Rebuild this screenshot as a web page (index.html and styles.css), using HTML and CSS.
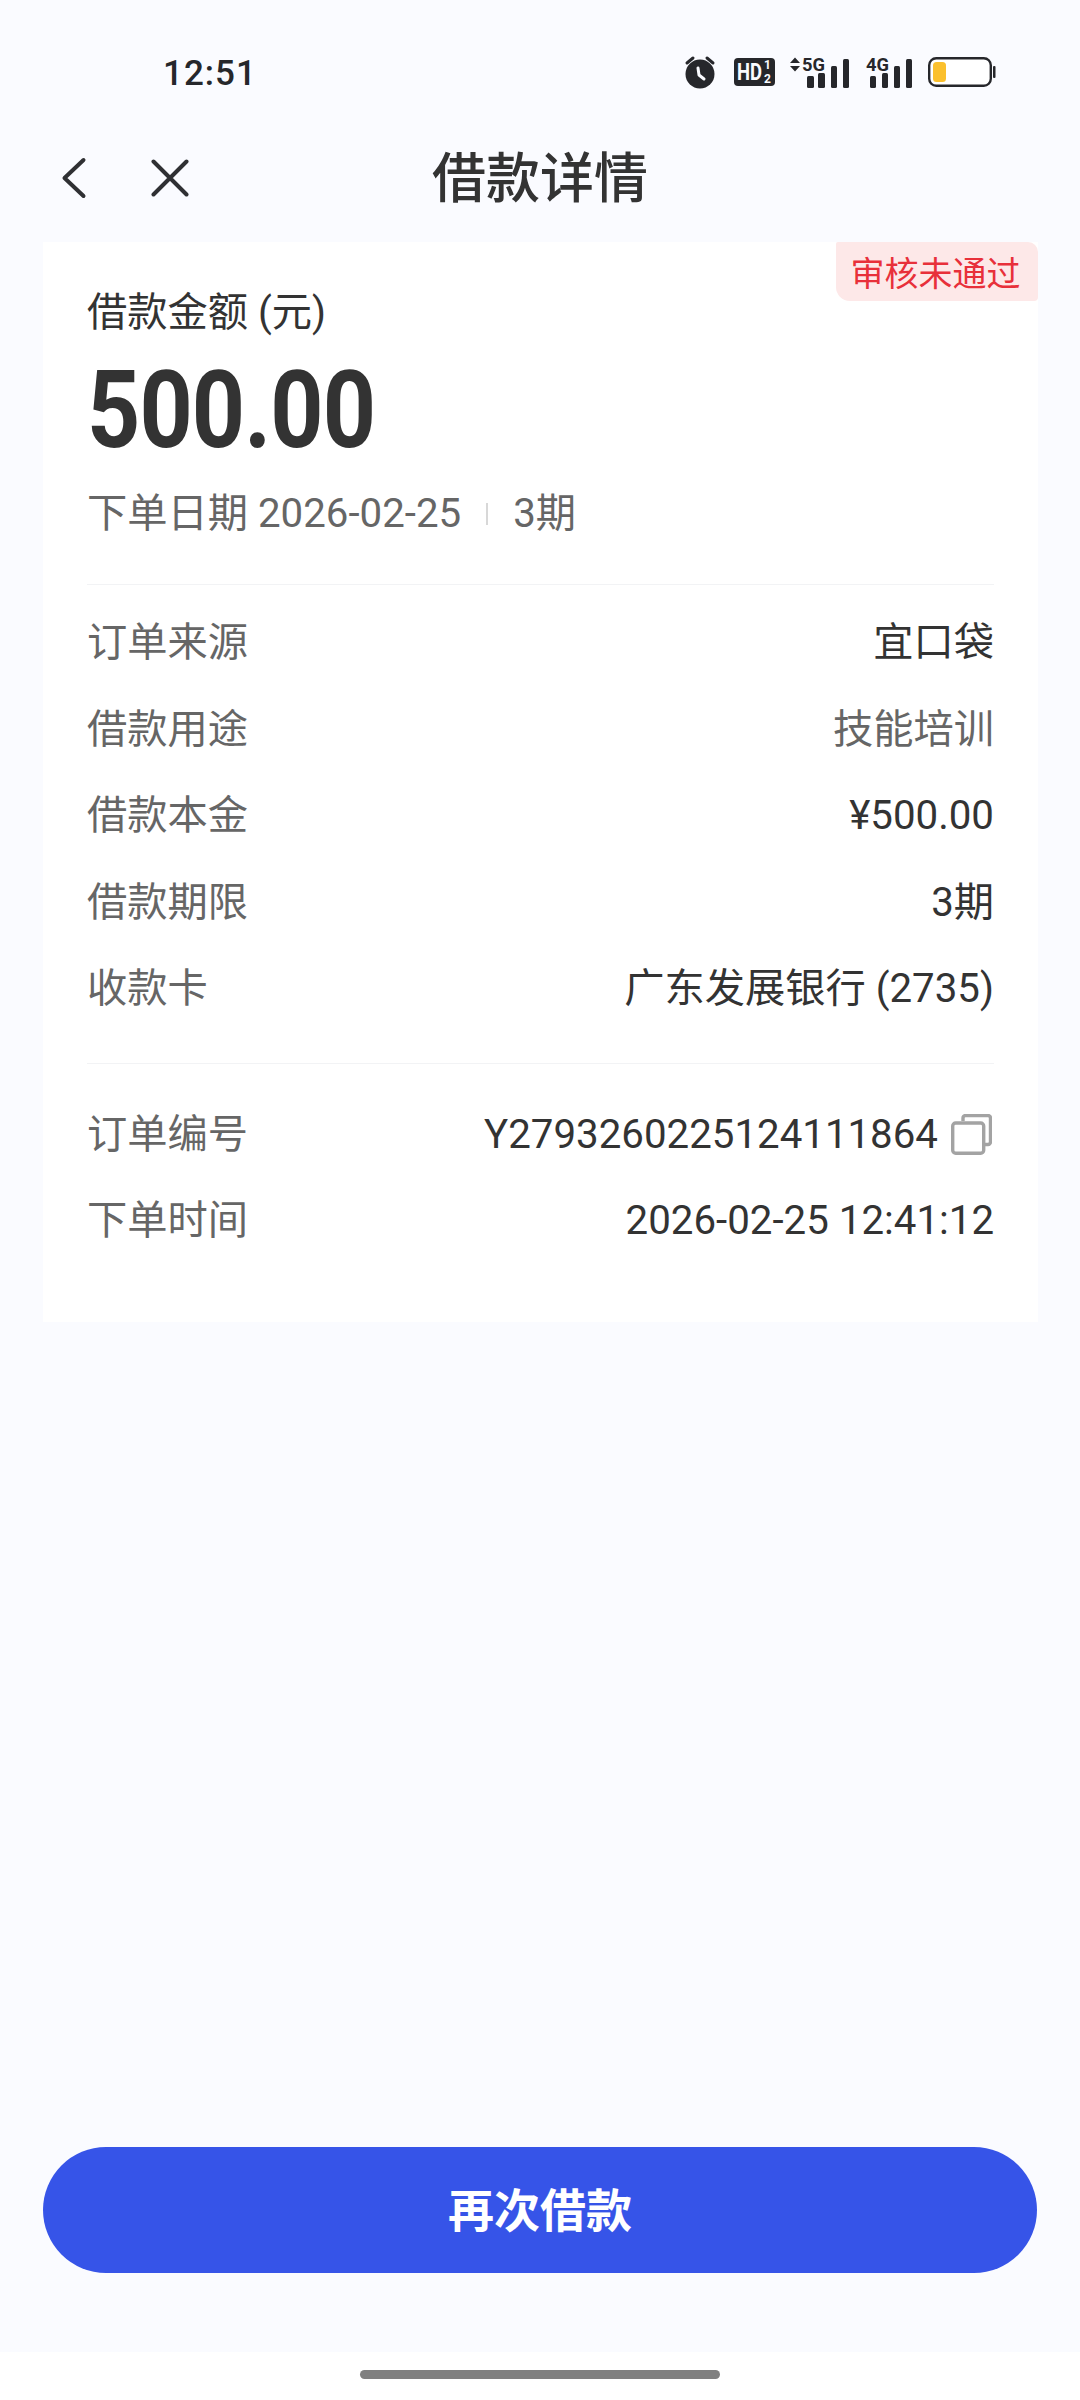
FILE: index.html
```html
<!DOCTYPE html>
<html lang="zh-CN">
<head>
<meta charset="utf-8">
<title>借款详情</title>
<link rel="stylesheet" href="styles.css">
</head>
<body>
<div class="page">
  <div class="statusbar">
    <span class="time">12:51</span>
    <div class="status-icons">
      <svg class="ic-alarm" width="32" height="34" viewBox="0 0 32 34">
        <circle cx="16" cy="19" r="14.5" fill="#26272b"/>
        <path d="M3 8 9 3M29 8 23 3" stroke="#26272b" stroke-width="3" stroke-linecap="round" fill="none"/>
        <path d="M14 13 15 20 20 24" stroke="#fafbff" stroke-width="3" stroke-linecap="round" stroke-linejoin="round" fill="none"/>
      </svg>
      <svg class="ic-hd" width="41" height="28" viewBox="0 0 41 28">
        <rect width="41" height="28" rx="4" fill="#26272b"/>
        <text x="3" y="21.500" class="svg-hd" textLength="25" lengthAdjust="spacingAndGlyphs">HD</text>
        <text x="30" y="11" class="svg-small">1</text>
        <text x="30" y="25" class="svg-small">2</text>
      </svg>
      <svg class="ic-sig5" width="60" height="36" viewBox="0 -4 60 36">
        <path d="M1 7 6 1.500 11 7ZM1 10 6 15.500 11 10Z" fill="#26272b"/>
        <text x="13" y="15" class="svg-net" textLength="23" lengthAdjust="spacingAndGlyphs">5G</text>
        <rect x="18" y="20" width="7" height="12" rx="1.500" fill="#26272b"/>
        <rect x="29" y="17" width="7" height="15" rx="1.500" fill="#26272b"/>
        <rect x="42" y="10" width="6" height="22" rx="1.500" fill="#26272b"/>
        <rect x="54" y="3" width="6" height="29" rx="1.500" fill="#26272b"/>
      </svg>
      <svg class="ic-sig4" width="47" height="36" viewBox="0 -4 47 36">
        <text x="1" y="15" class="svg-net" textLength="23" lengthAdjust="spacingAndGlyphs">4G</text>
        <rect x="5" y="20" width="6" height="12" rx="1.500" fill="#26272b"/>
        <rect x="17" y="17" width="6" height="15" rx="1.500" fill="#26272b"/>
        <rect x="29" y="10" width="6" height="22" rx="1.500" fill="#26272b"/>
        <rect x="41" y="3" width="6" height="29" rx="1.500" fill="#26272b"/>
      </svg>
      <svg class="ic-batt" width="68" height="30" viewBox="0 0 68 30">
        <rect x="1.200" y="1.200" width="61.600" height="27.600" rx="7" fill="#fff" stroke="#26272b" stroke-width="2.400"/>
        <rect x="5" y="5" width="13" height="20" rx="3.500" fill="#fbc02d"/>
        <rect x="65" y="9" width="2.500" height="12" rx="1" fill="#26272b"/>
      </svg>
    </div>
  </div>

  <header class="navbar">
    <svg class="nav-back" width="26" height="42" viewBox="0 0 26 42">
      <path d="M22.500 3 3.500 21 22.500 39" fill="none" stroke="#2f3033" stroke-width="4" stroke-linecap="round" stroke-linejoin="round"/>
    </svg>
    <svg class="nav-close" width="38" height="38" viewBox="0 0 38 38">
      <path d="M2.500 2.500 35.500 35.500M35.500 2.500 2.500 35.500" fill="none" stroke="#2f3033" stroke-width="4" stroke-linecap="round"/>
    </svg>
    <h1 class="nav-title">借款详情</h1>
  </header>

  <main class="card">
    <span class="badge">审核未通过</span>
    <div class="summary">
      <div class="amount-label">借款金额 (元)</div>
      <div class="amount">500.00</div>
      <div class="meta">
        <span>下单日期 2026-02-25</span>
        <i class="meta-sep"></i>
        <span>3期</span>
      </div>
    </div>
    <div class="group group-first">
      <div class="row"><span class="row-label">订单来源</span><span class="row-value">宜口袋</span></div>
      <div class="row"><span class="row-label">借款用途</span><span class="row-value muted">技能培训</span></div>
      <div class="row"><span class="row-label">借款本金</span><span class="row-value">¥500.00</span></div>
      <div class="row"><span class="row-label">借款期限</span><span class="row-value">3期</span></div>
      <div class="row"><span class="row-label">收款卡</span><span class="row-value">广东发展银行 (2735)</span></div>
    </div>
    <div class="group group-second">
      <div class="row">
        <span class="row-label">订单编号</span>
        <span class="row-value with-icon">Y2793260225124111864
          <svg class="copy" width="41" height="41" viewBox="0 0 41 41">
            <path d="M12 7V4a2.500 2.500 0 0 1 2.500-2.500H37A2.500 2.500 0 0 1 39.500 4v24a2.500 2.500 0 0 1-2.500 2.500h-4" fill="none" stroke="#a3a3a3" stroke-width="3.400"/>
            <rect x="1.700" y="9" width="31" height="30.300" rx="3" fill="none" stroke="#a3a3a3" stroke-width="3.400"/>
          </svg>
        </span>
      </div>
      <div class="row"><span class="row-label">下单时间</span><span class="row-value">2026-02-25 12:41:12</span></div>
    </div>
  </main>

  <button class="cta">再次借款</button>
  <div class="homebar"><span class="home-handle"></span></div>
</div>
</body>
</html>
```

FILE: styles.css
```css
* { box-sizing: border-box; }
html, body { margin: 0; padding: 0; }
body {
  width: 1080px;
  height: 2400px;
  background: #fafbff;
  font-family: Roboto, "Noto Sans CJK SC", sans-serif;
  color: #333;
}
.page {
  display: flex;
  flex-direction: column;
  height: 2400px;
}
.statusbar {
  height: 130px;
  padding: 42px 0 0 163px;
  display: flex;
  align-items: flex-start;
  justify-content: space-between;
}
.time {
  font-size: 35px;
  font-weight: 500;
  line-height: 60px;
  margin-top: 2px;
  color: #26272b;
  letter-spacing: 1px;
}
.status-icons {
  display: flex;
  align-items: center;
  height: 46px;
  margin-right: 84px;
  margin-top: 7px;
}
.status-icons svg { display: block; flex: none; }
.ic-hd { margin-left: 18px; }
.ic-sig5 { margin: 0 0 4px 14px; }
.ic-sig4 { margin: 0 0 4px 16px; }
.ic-batt { margin-left: 16px; }
.svg-hd { font: 700 23px Roboto, sans-serif; fill: #fafbff; }
.svg-small { font: 700 12px Roboto, sans-serif; fill: #fafbff; }
.svg-net { font: 700 19px Roboto, sans-serif; fill: #26272b; }

.navbar {
  height: 112px;
  display: flex;
  align-items: center;
  padding: 0 0 16px 61px;
  position: relative;
}
.nav-close { margin-left: 64px; }
.nav-title {
  margin: 0;
  position: absolute;
  top: 14px;
  left: 0;
  right: 0;
  text-align: center;
  font-size: 54px;
  font-weight: 500;
  line-height: 72px;
  color: #333;
  pointer-events: none;
}
.card {
  position: relative;
  margin: 0 42px 0 43px;
  height: 1080px;
  background: #fff;
  padding: 0 44px;
}
.badge {
  position: absolute;
  top: 0;
  right: 0;
  height: 59px;
  width: 202px;
  padding-right: 3px;
  display: flex;
  align-items: center;
  justify-content: center;
  background: #fde8e8;
  color: #e8303a;
  font-size: 34px;
  border-radius: 2px 10px 4px 14px;
}
.summary {
  height: 343px;
  padding-top: 45px;
  border-bottom: 1px solid #f2f3f5;
}
.amount-label {
  font-size: 40.25px;
  line-height: 52px;
  color: #333;
}
.amount {
  font-size: 108px;
  font-weight: 700;
  line-height: 112px;
  margin-top: 15px;
  letter-spacing: -1px;
  color: #333;
  transform: scaleX(.86);
  transform-origin: left center;
}
.meta {
  margin-top: 22px;
  display: flex;
  align-items: center;
  font-size: 40.25px;
  line-height: 52px;
  color: #666;
}
.meta-sep {
  width: 2px;
  height: 22px;
  background: #d8d8d8;
  margin: 0 25px;
}
.group-first {
  padding: 15px 0 30px;
  border-bottom: 1px solid #f2f3f5;
}
.group-second { padding-top: 28px; }
.row {
  height: 86.5px;
  display: flex;
  align-items: center;
  justify-content: space-between;
  font-size: 40.25px;
  line-height: 52px;
}
.row-label { color: #666; }
.row-value { color: #333; }
.row-value.muted { color: #666; }
.with-icon { display: flex; align-items: center; gap: 13px; padding-right: 2px; }
.copy { display: block; flex: none; }

.cta {
  margin: auto 43px 0;
  height: 126px;
  border: 0;
  border-radius: 63px;
  background: #3654e8;
  color: #fff;
  font-family: inherit;
  font-size: 46px;
  font-weight: 700;
  padding: 0 0 7px;
}
.homebar {
  margin-top: 79px;
  height: 48px;
  background: #fff;
  display: flex;
  justify-content: center;
  padding-top: 18px;
}
.home-handle {
  width: 360px;
  height: 9px;
  border-radius: 5px;
  background: #808080;
}
```
